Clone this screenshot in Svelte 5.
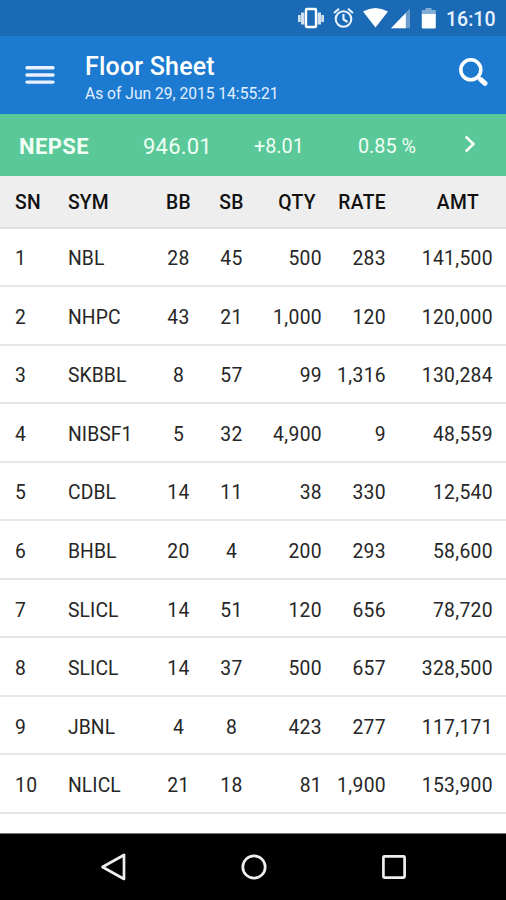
<script>
  const rows = [
    ['1', 'NBL', '28', '45', '500', '283', '141,500'],
    ['2', 'NHPC', '43', '21', '1,000', '120', '120,000'],
    ['3', 'SKBBL', '8', '57', '99', '1,316', '130,284'],
    ['4', 'NIBSF1', '5', '32', '4,900', '9', '48,559'],
    ['5', 'CDBL', '14', '11', '38', '330', '12,540'],
    ['6', 'BHBL', '20', '4', '200', '293', '58,600'],
    ['7', 'SLICL', '14', '51', '120', '656', '78,720'],
    ['8', 'SLICL', '14', '37', '500', '657', '328,500'],
    ['9', 'JBNL', '4', '8', '423', '277', '117,171'],
    ['10', 'NLICL', '21', '18', '81', '1,900', '153,900']
  ];
  const heads = ['SN', 'SYM', 'BB', 'SB', 'QTY', 'RATE', 'AMT'];
</script>

<div class="screen">
  <div class="status">
    <svg class="sysicons" viewBox="0 0 150 36" width="150" height="36" fill="#fff">
      <g opacity=".8"><rect x="8" y="15" width="2.7" height="7" /><rect x="11" y="12.5" width="3.4" height="12" /><rect x="27.6" y="12.5" width="3.4" height="12" /><rect x="31.3" y="15" width="2.7" height="7" /></g>
      <rect x="16" y="9" width="10" height="18" rx="1" fill="none" stroke="#fff" stroke-width="2.4" />
      <g fill="none" stroke="#eaf3ff" stroke-width="2.1">
        <circle cx="53.5" cy="19" r="7.8" />
        <path d="M53.5 14v5.4l4 2.6M44 13l5-4.2M63 13l-5-4.2" />
      </g>
      <path d="M73 11.6Q85.4 4.5 98 11.6L85.5 27.5Z" />
      <path d="M120 8.5V28.3H101Z" opacity=".35" />
      <path d="M115.8 13V28.3H101Z" />
      <path d="M135.5 8h6v2h4.3v5h-14v-5h3.7z" opacity=".45" />
      <path d="M131.8 14h14v13.4q0 1-1 1h-12q-1 0-1-1z" />
    </svg>
    <span class="clock">16:10</span>
  </div>
  <header>
    <svg class="menu" viewBox="0 0 30 20" width="30" height="20" stroke="#e8f0ff" stroke-width="3.4" stroke-linecap="round"><path d="M2 2.8h26M2 10h26M2 17.1h26" /></svg>
    <div class="titles">
      <div class="title">Floor Sheet</div>
      <div class="sub">As of Jun 29, 2015 14:55:21</div>
    </div>
    <svg class="search" viewBox="0 0 30 30" width="30" height="30" fill="none" stroke="#fff"><circle cx="12.8" cy="12.8" r="10" stroke-width="3.6" /><path d="M19.7 19.7l2.3 2.3" stroke-width="2.5" /><path d="M22.8 22.6l4.2 3.8" stroke-width="5" stroke-linecap="round" /></svg>
  </header>
  <div class="index">
    <span class="name">NEPSE</span>
    <span class="value">946.01</span>
    <span class="change">+8.01</span>
    <span class="percent">0.85 %</span>
    <svg viewBox="0 0 12 18" width="12" height="18" fill="none" stroke="#fff" stroke-width="2.5"><path d="M1.7 1.5L9.4 9l-7.7 7.5" /></svg>
  </div>
  <div class="row head">
    {#each heads as h}<span>{h}</span>{/each}
  </div>
  <main>
    {#each rows as row}
      <div class="row">
        {#each row as cell}<span>{cell}</span>{/each}
      </div>
    {/each}
  </main>
  <nav>
    <svg viewBox="0 0 28 28" width="28" height="28"><path d="M24 2V26L2.5 14Z" /></svg>
    <svg viewBox="0 0 28 28" width="28" height="28"><circle cx="14" cy="14" r="11.2" /></svg>
    <svg viewBox="0 0 28 28" width="28" height="28"><rect x="3.4" y="3.4" width="21.2" height="21.2" rx="1" /></svg>
  </nav>
</div>

<style>
  .screen {
    width: 506px;
    height: 900px;
    display: flex;
    flex-direction: column;
    overflow: hidden;
    background: #fff;
    font-family: Roboto, sans-serif;
    color: #262626;
    white-space: nowrap;
  }
  svg { display: block; flex: none; }
  .status {
    height: 36px;
    flex: none;
    display: flex;
    align-items: center;
    padding-left: 290px;
    background: #1a6ab5;
  }
  .clock {
    color: #e8f2ff;
    font-size: 19.5px;
    font-weight: 500;
    margin: 2px 0 0 6px;
  }
  header {
    height: 78px;
    flex: none;
    display: flex;
    background: #1c7bd0;
    color: #fff;
  }
  .menu { margin: 29px 0 0 25px; }
  .titles { width: 373px; margin: 15px 0 0 30px; }
  .title { font-size: 25px; line-height: 32px; font-weight: 500; letter-spacing: .2px; }
  .sub { font-size: 15.6px; line-height: 22px; color: #e3f0ff; }
  .search { margin-top: 21px; }
  .index {
    height: 62px;
    flex: none;
    display: grid;
    grid-template-columns: 124px 111px 104px 106px 12px;
    align-items: center;
    padding-left: 19px;
    background: #5ac898;
    color: #f0fff5;
  }
  .index span { padding-top: 2px; }
  .index svg { margin-top: -2px; }
  .name { font-size: 22px; font-weight: 700; letter-spacing: .4px; }
  .value { font-size: 22px; letter-spacing: .2px; }
  .change, .percent { font-size: 19.8px; }
  .row {
    display: grid;
    grid-template-columns: 52px 85px 53px 53px 64px 64px 107px;
    align-items: center;
    height: 58.55px;
    box-sizing: border-box;
    padding-left: 15px;
    border-bottom: 2px solid #e6e6e6;
    font-size: 19.3px;
    letter-spacing: .35px;
  }
  .row span { padding-top: 4px; }
  .row span:nth-child(2) { padding-left: 1px; letter-spacing: .1px; }
  .row span:nth-child(3), .row span:nth-child(4) { text-align: center; }
  .row span:nth-child(n + 5) { text-align: right; }
  .head {
    height: 52.5px;
    flex: none;
    background: #eee;
    border-color: #e1e1e1;
    font-weight: 500;
    color: #111;
  }
  .head span { padding-top: 2px; }
  .head span:nth-child(5) { padding-right: 6px; }
  .head span:nth-child(7) { padding-right: 14px; }
  main { height: 604.5px; flex: none; overflow: hidden; }
  nav {
    height: 67px;
    flex: none;
    box-sizing: border-box;
    display: flex;
    justify-content: space-between;
    align-items: center;
    padding: 0 98px 0 100px;
    background: #000;
    border-top: 1px solid #777;
  }
  nav svg { fill: none; stroke: #eee; stroke-width: 2.7; stroke-linejoin: round; }
</style>
